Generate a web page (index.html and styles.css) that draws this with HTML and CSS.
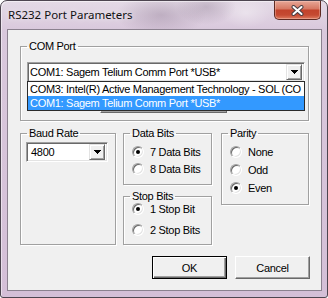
FILE: index.html
```html
<!DOCTYPE html>
<html lang="en">
<head>
    <meta charset="UTF-8">
    <meta name="viewport" content="width=device-width, initial-scale=1.0">
    <title>RS232 Port Parameters</title>
    <link rel="stylesheet" href="styles.css">
</head>
<body>
    <div class="window">
        <div class="titlebar">
            <span class="title">RS232 Port Parameters</span>
            <button class="close-btn" aria-label="Close">
                <svg width="13" height="11" viewBox="0 0 13 11">
                    <path d="M2.5 2 L10.5 9 M10.5 2 L2.5 9" stroke="#4a3f44" stroke-width="4" stroke-linecap="round"/>
                    <path d="M2.5 2 L10.5 9 M10.5 2 L2.5 9" stroke="#fff" stroke-width="2" stroke-linecap="round"/>
                </svg>
            </button>
        </div>

        <div class="client">
            <fieldset class="group group-com">
                <legend>COM Port</legend>
                <div class="combo-wrap">
                    <div class="combo">
                        <span class="combo-text">COM1: Sagem Telium Comm Port *USB*</span>
                        <span class="combo-btn">
                            <svg width="7" height="4" viewBox="0 0 7 4"><polygon points="0,0 7,0 3.5,4" fill="#000"/></svg>
                        </span>
                    </div>
                    <ul class="dropdown">
                        <li>COM3: Intel(R) Active Management Technology - SOL (CO</li>
                        <li class="selected">COM1: Sagem Telium Comm Port *USB*</li>
                    </ul>
                </div>
                <button class="btn btn-hidden" aria-label="Settings"></button>
            </fieldset>

            <div class="settings">
                <fieldset class="group group-baud">
                    <legend>Baud Rate</legend>
                    <div class="combo combo-baud">
                        <span class="combo-text">4800</span>
                        <span class="combo-btn">
                            <svg width="7" height="4" viewBox="0 0 7 4"><polygon points="0,0 7,0 3.5,4" fill="#000"/></svg>
                        </span>
                    </div>
                </fieldset>

                <div class="bits-col">
                    <fieldset class="group group-data">
                        <legend>Data Bits</legend>
                        <div class="radios">
                            <label class="radio-row"><span class="radio checked"></span>7 Data Bits</label>
                            <label class="radio-row"><span class="radio"></span>8 Data Bits</label>
                        </div>
                    </fieldset>
                    <fieldset class="group group-stop">
                        <legend>Stop Bits</legend>
                        <div class="radios">
                            <label class="radio-row"><span class="radio checked"></span>1 Stop Bit</label>
                            <label class="radio-row"><span class="radio"></span>2 Stop Bits</label>
                        </div>
                    </fieldset>
                </div>

                <fieldset class="group group-parity">
                    <legend>Parity</legend>
                    <div class="radios">
                        <label class="radio-row"><span class="radio"></span>None</label>
                        <label class="radio-row"><span class="radio"></span>Odd</label>
                        <label class="radio-row"><span class="radio checked"></span>Even</label>
                    </div>
                </fieldset>
            </div>

            <div class="actions">
                <button class="btn btn-default">OK</button>
                <button class="btn">Cancel</button>
            </div>
        </div>
    </div>
</body>
</html>
```

FILE: styles.css
```css
* {
    box-sizing: border-box;
}

body {
    margin: 0;
    width: 328px;
    height: 298px;
    overflow: hidden;
    font-family: "Liberation Sans", Arial, sans-serif;
    font-size: 11px;
    letter-spacing: -0.3px;
    color: #000;
    background: #fff;
}

/* window frame (aero-ish, lavender blur) */
.window {
    width: 328px;
    height: 298px;
    display: flex;
    flex-direction: column;
    border: 1px solid #4d4550;
    border-radius: 7px 7px 3px 3px;
    background:
        radial-gradient(ellipse 45px 22px at 160px 14px, rgba(130, 110, 135, 0.35), transparent),
        radial-gradient(ellipse 30px 18px at 205px 6px, rgba(120, 100, 125, 0.3), transparent),
        radial-gradient(ellipse 25px 15px at 245px 12px, rgba(255, 255, 255, 0.35), transparent),
        linear-gradient(to bottom, #e4dae6, #d9c8dc 30px, #d4bfd7);
    box-shadow: inset 1px 1px 0 rgba(255, 255, 255, 0.5);
}

.titlebar {
    height: 28px;
    display: flex;
    align-items: flex-start;
    padding-left: 7px;
}

.title {
    margin-top: 6px;
    font-family: "Noto Sans", "Open Sans", sans-serif;
    font-size: 11.5px;
    letter-spacing: 0;
    line-height: 16px;
    color: #111;
    text-shadow: 0 0 6px rgba(255, 255, 255, 0.8);
}

.close-btn {
    margin-left: auto;
    margin-right: 6px;
    width: 47px;
    height: 19px;
    padding: 0;
    display: flex;
    align-items: center;
    justify-content: center;
    border: 1px solid #5e2a22;
    border-top: none;
    border-radius: 0 0 5px 5px;
    background: linear-gradient(to bottom, #e7a797 0%, #d77a65 42%, #c2432c 52%, #c54a32 78%, #de7c61 100%);
    box-shadow: inset 0 0 0 1px rgba(255, 220, 210, 0.35);
}

.close-btn svg {
    display: block;
}

/* dialog client area */
.client {
    flex: 1;
    margin: 0 5px 6px 6px;
    border: 1px solid #8b818f;
    background: #f0f0f0;
    padding: 10px 0 0 12px;
}

.group {
    position: relative;
    margin: 0;
    padding: 0;
    min-width: 0;
    border: 1px solid #a0a0a0;
    box-shadow: 1px 1px 0 #fff, inset 1px 1px 0 #fff;
}

.group legend {
    margin-left: 6px;
    padding: 0 2px;
    line-height: 13px;
}

.group-com {
    width: 289px;
    height: 81px;
}

.combo-wrap {
    position: relative;
    margin: 9px 0 0 6px;
    width: 278px;
}

.combo {
    display: flex;
    align-items: center;
    height: 20px;
    padding: 2px;
    background: #fff;
    border: 1px solid;
    border-color: #a0a0a0 #fff #fff #a0a0a0;
    box-shadow: inset 1px 1px 0 #696969, inset -1px -1px 0 #e3e3e3;
}

.combo-text {
    flex: 1;
    white-space: nowrap;
    overflow: hidden;
    line-height: 14px;
}

.combo-btn {
    width: 16px;
    height: 16px;
    display: flex;
    align-items: center;
    justify-content: center;
    background: #f0f0f0;
    border: 1px solid;
    border-color: #e3e3e3 #696969 #696969 #e3e3e3;
    box-shadow: inset 1px 1px 0 #fff, inset -1px -1px 0 #a0a0a0;
}

.combo-btn svg {
    display: block;
    shape-rendering: crispEdges;
}

.dropdown {
    position: absolute;
    top: 19px;
    left: 0;
    right: 0;
    z-index: 2;
    margin: 0;
    padding: 0;
    list-style: none;
    background: #fff;
    border: 1px solid #2b2b2b;
}

.dropdown li {
    height: 14px;
    line-height: 14px;
    padding: 0 2px;
    white-space: nowrap;
    overflow: hidden;
}

.dropdown li.selected {
    background: #3399ff;
    color: #fff;
}

.btn {
    height: 23px;
    width: 75px;
    padding: 0;
    font-family: inherit;
    font-size: 11px;
    letter-spacing: inherit;
    color: #000;
    background: #f0f0f0;
    border: 1px solid;
    border-color: #fff #696969 #696969 #fff;
    box-shadow: inset -1px -1px 0 #a0a0a0;
}

.btn-default {
    border: 1px solid #000;
    box-shadow: inset 1px 1px 0 #fff, inset -1px -1px 0 #696969, inset -2px -2px 0 #a0a0a0;
}

.btn-hidden {
    display: block;
    width: 127px;
    height: 24px;
    margin: 7px 0 0 79px;
}

/* second row of groups */
.settings {
    display: flex;
    align-items: flex-start;
    margin-top: 6px;
}

.group-baud {
    width: 96px;
    height: 118px;
}

.combo-baud {
    margin: 2px 0 0 5px;
    width: 82px;
}

.combo-baud .combo-text {
    padding-left: 2px;
}

.bits-col {
    width: 89px;
    margin-left: 7px;
    display: flex;
    flex-direction: column;
    gap: 5px;
}

.group-data {
    height: 58px;
}

.group-stop {
    height: 55px;
}

.group-parity {
    width: 88px;
    height: 78px;
    margin-left: 9px;
}

.radios {
    display: flex;
    flex-direction: column;
    gap: 3px;
    padding: 5px 0 0 8px;
}

.group-parity .radios {
    gap: 4px;
}

.group-stop .radios {
    gap: 7px;
    padding-top: 0;
    margin-top: -1px;
}

.radio-row {
    display: flex;
    align-items: center;
    gap: 6px;
    height: 14px;
    line-height: 14px;
}

.radio {
    position: relative;
    width: 12px;
    height: 12px;
    border-radius: 50%;
    background: #fff;
    border: 1px solid;
    border-color: #a0a0a0 #fff #fff #a0a0a0;
    box-shadow: inset 1px 1px 0 #696969, inset -1px -1px 0 #e3e3e3;
}

.radio.checked::after {
    content: "";
    position: absolute;
    left: 3px;
    top: 3px;
    width: 4px;
    height: 4px;
    border-radius: 50%;
    background: #000;
}

.actions {
    display: flex;
    justify-content: flex-end;
    gap: 8px;
    margin-top: 11px;
    padding-right: 11px;
}
```
